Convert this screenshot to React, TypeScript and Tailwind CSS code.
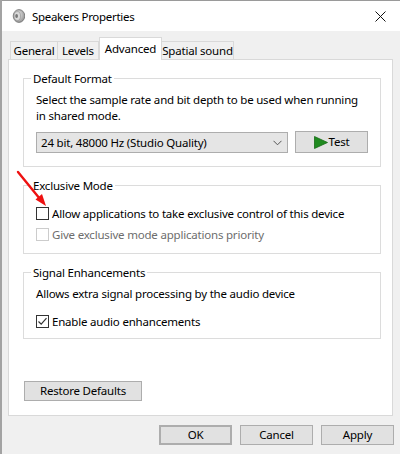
import React from "react";

const font = { fontFamily: '"Noto Sans", "Open Sans", sans-serif' };

function Group({ label, className, children }: { label: string; className?: string; children: React.ReactNode }) {
  return (
    <div className={"relative border border-[#dcdcdc] " + (className ?? "")}>
      <div className="absolute -top-[8px] left-[7px] whitespace-nowrap bg-white px-[2px] leading-[16px] text-black">{label}</div>
      {children}
    </div>
  );
}

function Check({ checked, disabled }: { checked?: boolean; disabled?: boolean }) {
  return (
    <div
      className={
        "flex h-[13px] w-[13px] shrink-0 items-center justify-center border bg-white " +
        (disabled ? "border-[#cccccc]" : "border-[#333333]")
      }
    >
      {checked && (
        <svg width="11" height="11" viewBox="0 0 11 11">
          <path d="M1.5 5.5 L4.2 8.2 L9.5 2.2" fill="none" stroke="#333" strokeWidth="1.2" />
        </svg>
      )}
    </div>
  );
}

function Btn({ children, className }: { children: React.ReactNode; className?: string }) {
  return (
    <div
      className={
        "flex shrink-0 items-center justify-center whitespace-nowrap border border-[#adadad] bg-[#e1e1e1] text-black " + (className ?? "")
      }
    >
      {children}
    </div>
  );
}

export default function App() {
  return (
    <div style={font} className="relative h-[454px] w-[400px] overflow-hidden border-l-[2px] border-[#a3a3a3] bg-[#f0f0f0] text-[11.5px] tracking-[-0.2px] text-black">
      {/* title bar */}
      <div className="flex h-[31px] items-center border-t border-[#9a9a9a] bg-white">
        <svg className="ml-[10px]" width="13" height="14" viewBox="0 0 13 14">
          <defs>
            <radialGradient id="g1" cx="0.4" cy="0.4" r="0.7">
              <stop offset="0" stopColor="#f4f4f4" />
              <stop offset="1" stopColor="#8a8a8a" />
            </radialGradient>
          </defs>
          <ellipse cx="7" cy="7" rx="5.8" ry="6.4" fill="url(#g1)" stroke="#6f6f6f" strokeWidth="0.8" />
          <ellipse cx="5.3" cy="7" rx="3.2" ry="4.4" fill="#dadada" stroke="#8c8c8c" strokeWidth="0.6" />
          <ellipse cx="4.6" cy="7" rx="1.4" ry="2" fill="#777" />
        </svg>
        <span className="ml-[7px] mt-[1px] text-[11.5px] leading-none tracking-[-0.3px]">Speakers Properties</span>
        <svg className="ml-auto mr-[14px]" width="11" height="11" viewBox="0 0 11 11">
          <path d="M0.5 0.5 L10.5 10.5 M10.5 0.5 L0.5 10.5" stroke="#111" strokeWidth="1" />
        </svg>
      </div>

      {/* tabs */}
      <div className="ml-[8px] mt-[6px] flex h-[22px] items-end whitespace-nowrap">
        <div className="flex h-[18px] w-[48px] items-center justify-center border border-b-0 border-[#d9d9d9] bg-[#f0f0f0]">General</div>
        <div className="-ml-px flex h-[18px] w-[42px] items-center justify-center border border-b-0 border-[#d9d9d9] bg-[#f0f0f0]">Levels</div>
        <div className="relative z-10 -mb-px flex h-[23px] w-[63px] items-start justify-center border border-b-0 border-[#d9d9d9] bg-white pt-[2px]">Advanced</div>
        <div className="flex h-[18px] w-[72px] items-center justify-center border border-b-0 border-l-0 border-[#d9d9d9] bg-[#f0f0f0]">Spatial sound</div>
      </div>

      {/* panel */}
      <div className="ml-[6px] flex h-[357px] w-[385px] flex-col border border-[#d9d9d9] bg-white pl-[14px] pr-[11px]">
        <Group label="Default Format" className="mt-[18px] h-[89px] shrink-0 pl-[12px] pr-[11px]">
          <div className="mt-[13px] leading-[16px]">
            Select the sample rate and bit depth to be used when running in shared mode.
          </div>
          <div className="mt-[8px] flex items-center">
            <div className="flex h-[21px] w-[252px] items-center border border-[#adadad] bg-[#e5e5e5] pl-[4px] pr-[5px]">
              <span>24 bit, 48000 Hz (Studio Quality)</span>
              <svg className="ml-auto" width="9" height="6" viewBox="0 0 9 6">
                <path d="M0.5 0.8 L4.5 4.8 L8.5 0.8" fill="none" stroke="#555" strokeWidth="1" />
              </svg>
            </div>
            <Btn className="-mt-[1px] ml-[7px] h-[22px] w-[73px]">
              <svg width="14" height="13" viewBox="0 0 14 13" className="mr-[1px]">
                <path d="M0.5 0.5 L13.5 6.5 L0.5 12.5 Z" fill="#1f8a1f" stroke="#156b15" strokeWidth="0.8" />
              </svg>
              <span>Test</span>
            </Btn>
          </div>
        </Group>

        <Group label="Exclusive Mode" className="mt-[18px] h-[69px] shrink-0 pl-[12px]">
          <div className="mt-[21px] flex h-[13px] items-center whitespace-nowrap">
            <Check />
            <span className="ml-[3px]">Allow applications to take exclusive control of this device</span>
          </div>
          <div className="mt-[8px] flex h-[13px] items-center whitespace-nowrap">
            <Check disabled />
            <span className="ml-[3px] text-[#6d6d6d]">Give exclusive mode applications priority</span>
          </div>
        </Group>

        <Group label="Signal Enhancements" className="mt-[18px] h-[67px] shrink-0 pl-[12px]">
          <div className="mt-[13px] leading-[16px]">Allows extra signal processing by the audio device</div>
          <div className="mt-[13px] flex h-[13px] items-center whitespace-nowrap">
            <Check checked />
            <span className="ml-[3px]">Enable audio enhancements</span>
          </div>
        </Group>

        <Btn className="ml-px mt-[42px] h-[20px] w-[118px]">Restore Defaults</Btn>
      </div>

      {/* bottom buttons */}
      <div className="mt-[9px] flex justify-end gap-[8px] pr-[6px]">
        <Btn className="h-[20px] w-[73px] border-2 border-[#0078d7]">OK</Btn>
        <Btn className="h-[20px] w-[73px]">Cancel</Btn>
        <Btn className="h-[20px] w-[73px]">Apply</Btn>
      </div>

      {/* red arrow annotation */}
      <svg className="pointer-events-none absolute left-0 top-0" width="400" height="454" viewBox="0 0 400 454">
        <path d="M16 172 L38 199" stroke="#ee1111" strokeWidth="2.4" strokeLinecap="round" />
        <path d="M44 206 L33.5 199.5 L40 194 Z" fill="#ee1111" />
      </svg>
    </div>
  );
}
